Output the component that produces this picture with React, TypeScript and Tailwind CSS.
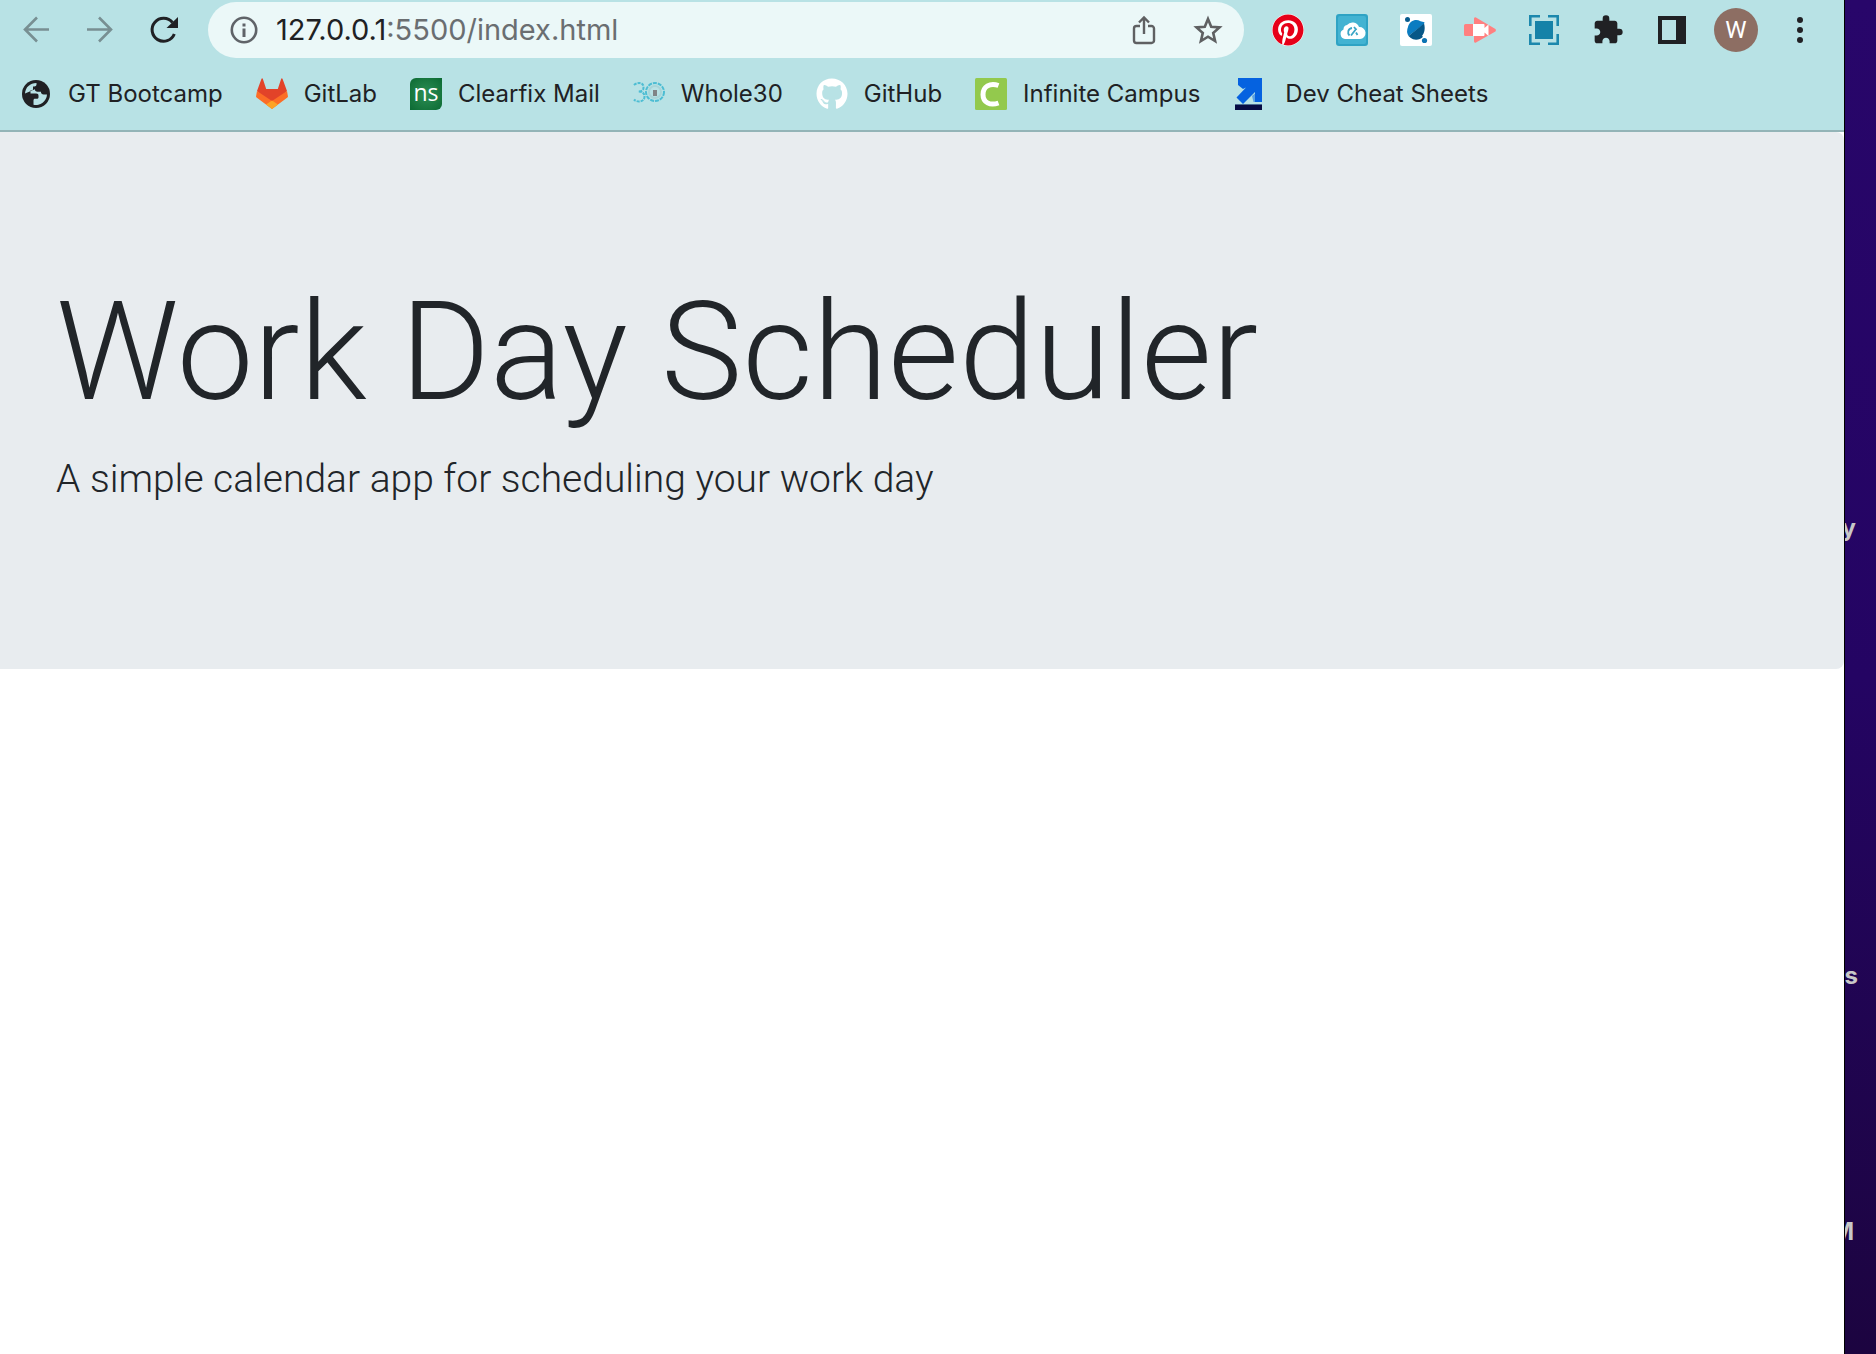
import React from "react";
import { MdExtension } from "react-icons/md";
import { FaGithub, FaPinterest } from "react-icons/fa";

function BackIcon({ flip = false }: { flip?: boolean }) {
  return (
    <svg viewBox="0 0 32 32" className={flip ? "size-8 -scale-x-100" : "size-8"} fill="none" stroke="#788f92" strokeWidth="2.6">
      <path d="M29 15.500H5M17 3.500 5 15.500l12 12" />
    </svg>
  );
}

function ReloadIcon() {
  return (
    <svg viewBox="0 0 32 32" className="size-8" fill="none">
      <path d="M26.300 20A11.500 11.500 0 1 1 24.500 8.500" stroke="#202124" strokeWidth="3" />
      <path d="M30 3v11H18.500z" fill="#202124" />
    </svg>
  );
}

function InfoIcon() {
  return (
    <svg viewBox="0 0 28 28" className="size-7 shrink-0" fill="none">
      <circle cx="14" cy="14" r="12.200" stroke="#5f6368" strokeWidth="2.600" />
      <path d="M14 12.500v8.500M14 7.500v3" stroke="#5f6368" strokeWidth="3" />
    </svg>
  );
}

function ShareIcon() {
  return (
    <svg viewBox="0 0 32 32" className="size-8" fill="none" stroke="#5f6062" strokeWidth="2.400">
      <path d="M12 12H8.500a2.500 2.500 0 0 0-2.500 2.500v12A2.500 2.500 0 0 0 8.500 29h15a2.500 2.500 0 0 0 2.500-2.500v-12a2.500 2.500 0 0 0-2.500-2.500H20M16 20V4M11 8.500l5-5 5 5" />
    </svg>
  );
}

function StarIcon() {
  return (
    <svg viewBox="0 0 32 32" className="size-8" fill="none" stroke="#5f6062" strokeWidth="2.600">
      <path d="m16 5 3.200 7.700 8.300.700-6.300 5.500 1.900 8.100-7.100-4.300L8.900 27l1.900-8.100-6.300-5.500 8.300-.700z" />
    </svg>
  );
}

function CloudIcon() {
  return (
    <svg viewBox="0 0 32 32" className="size-8">
      <rect width="32" height="32" rx="3" fill="#2fa3c4" />
      <rect x="2" y="2" width="28" height="28" rx="2" fill="#43b3d2" />
      <path d="M9 25a5 5 0 0 1-1.500-9.500A4.500 4.500 0 0 1 11 11a7 7 0 0 1 12 2 6 6 0 0 1 1 12z" fill="#fff" />
      <path d="M16 14c-4 .500-5 5-2.500 7.500M20.500 14.500l-5.500 7M20 18.500l1.500 2.500M18 13l2.500 3" fill="none" stroke="#3aa5c6" strokeWidth="1.800" />
    </svg>
  );
}

function OrbitIcon() {
  return (
    <svg viewBox="0 0 32 32" className="size-8">
      <rect width="32" height="32" rx="2" fill="#fff" />
      <circle cx="7.500" cy="5.500" r="2.500" fill="#0a5c8e" />
      <circle cx="24.500" cy="26.500" r="2.600" fill="#0b74b3" />
      <path d="M8.500 22A9 9.500 0 0 1 8 13C9.500 7 15.500 4.500 20.500 7.200L24.500 8.300 24 10z" fill="#0b7cc1" />
      <path d="M8.500 22 24 9.500c1.500 5 .500 9.500-2 12.500l1 .800c-3 3.500-9 4-12.500 1z" fill="#065787" />
    </svg>
  );
}

function CameraPlayIcon() {
  return (
    <svg viewBox="0 0 32 32" className="size-8">
      <path d="M0 11.500A1.500 1.500 0 0 1 1.500 10H10V4.500a1.500 1.500 0 0 1 2-1l19 11.200a1.700 1.700 0 0 1 0 3L12 28.500a1.500 1.500 0 0 1-2-1V22H1.500A1.500 1.500 0 0 1 0 20.500z" fill="#ff8080" />
      <path d="M9 10h10.500a1 1 0 0 1 1 1v3l4-3.500v11.500l-4-3.500V21a1 1 0 0 1-1 1H9z" fill="#fff" />
    </svg>
  );
}

function CaptureIcon() {
  return (
    <svg viewBox="0 0 32 32" className="size-8">
      <rect x="7" y="7" width="18" height="18" fill="#1582a8" />
      <path d="M2.300 12V2.300H12M20 2.300h9.700V12M29.700 20v9.700H20M12 29.700H2.300V20" fill="none" stroke="#1c88ad" strokeWidth="2.600" />
    </svg>
  );
}

function PanelIcon() {
  return (
    <svg viewBox="0 0 28 28" className="size-7">
      <path fillRule="evenodd" d="M0 0h28v28H0zM4 4v20h14V4z" fill="#202124" />
    </svg>
  );
}

function MenuDotsIcon() {
  return (
    <svg viewBox="0 0 32 32" className="size-8" fill="#202124">
      <circle cx="16" cy="6" r="3" />
      <circle cx="16" cy="16" r="3" />
      <circle cx="16" cy="26" r="3" />
    </svg>
  );
}

function GlobeIcon() {
  return (
    <svg viewBox="0 0 32 32" className="size-8">
      <circle cx="16" cy="16" r="14" fill="#202124" />
      <path d="M5 15.500C5.500 9 10 5.200 16.500 5v1.500c0 1.200-1 2-2.200 2H13v2.500c0 .800-.500 1.300-1.300 1.300H10.500v3.200h5.700c1.500 0 2.300.900 2.300 2.300v1.400c0 1-.800 1.600-1.700 1.600H15c-1 0-1.500.600-1.500 1.500v4.400a11 11 0 0 0 13.500-10.200h-3.500c-1.500 0-2.500-1-2.500-2.500v-.500h-3.500c-1.300 0-2-1-2-2v-.500" fill="#b8e2e5" />
      <path d="M15 9.500h2c1 0 1.500-.500 1.500-1.500V5l7 4 2 6.500h-4c-1.500 0-2.500-.700-2.500-2h-4c-1.300 0-2-1-2-2z" fill="#202124" />
    </svg>
  );
}

function GitLabIcon() {
  return (
    <svg viewBox="0 0 32 32" className="size-8">
      <path d="M1 13 5.500.700a.700.700 0 0 1 1.300 0L10.200 11h11.600L25.200.700a.700.700 0 0 1 1.300 0L31 13l-9 9-6 4-6-4z" fill="#e24329" />
      <path d="M1 13 16 23 31 13l.900 4.900a1.500 1.500 0 0 1-.500 1.600L16 31 .600 19.500a1.500 1.500 0 0 1-.500-1.600z" fill="#fc6d26" />
      <path d="m10 26.500 6-4 6 4L16 31z" fill="#fca326" />
    </svg>
  );
}

function MailIcon() {
  return (
    <span className="flex size-8 items-center justify-center rounded-tl-md rounded-br-md bg-radial from-[#2c8f55] to-[#0a6a33] pb-1 font-['Open_Sans',sans-serif] text-[23px] leading-none text-white">
      ns
    </span>
  );
}

function ThirtyIcon() {
  return (
    <svg viewBox="0 0 32 32" className="size-8" fill="none" stroke="#4dbdd3" strokeWidth="2">
      <path d="M1 7c3-3 10-3 9.500 2.500 0 3-2 4-5 4 4 0 6 2 6 5 0 6-8 6-10.500 3" strokeDasharray="3 1" />
      <circle cx="22" cy="14" r="9" strokeDasharray="4 1" />
      <circle cx="22" cy="14" r="6" stroke="#a9d5d8" />
      <path d="M22 12v6" stroke="#808486" strokeWidth="4" />
    </svg>
  );
}

function CampusIcon() {
  return (
    <svg viewBox="0 0 32 32" className="size-8">
      <rect width="32" height="32" rx="1.500" fill="#93c94d" />
      <path d="M23.500 7.500C15 4.500 8 8.500 8 16.500S15 28 23.500 25" fill="none" stroke="#fff" strokeWidth="5" />
    </svg>
  );
}

function CheatIcon() {
  return (
    <svg viewBox="0 0 32 32" className="size-8">
      <path d="M5 0h24v24h-7V14L10 26l-6.500-6.500L13 9.500l-3 1.500-5-4z" fill="#0562e0" />
      <path d="m19 18 1.500 6H22V15.500z" fill="#5aa0e4" />
      <path d="M2 27h27v5H2z" fill="#070c43" />
      <path d="M2 26h27v1H2z" fill="#4b6c92" />
    </svg>
  );
}

const extensions: { name: string; icon: React.ReactNode }[] = [
  {
    name: "Pinterest",
    icon: (
      <span className="rounded-full bg-white">
        <FaPinterest className="size-8 text-[#e60019]" />
      </span>
    ),
  },
  { name: "Cloud", icon: <CloudIcon /> },
  { name: "Orbit", icon: <OrbitIcon /> },
  { name: "Screen recorder", icon: <CameraPlayIcon /> },
  { name: "Screen capture", icon: <CaptureIcon /> },
  { name: "Extensions", icon: <MdExtension className="size-8 text-[#202124]" /> },
  { name: "Side panel", icon: <PanelIcon /> },
  {
    name: "Profile",
    icon: (
      <span className="flex size-11 items-center justify-center rounded-full bg-[#8d6e63] font-[Roboto,sans-serif] text-2xl text-white">
        W
      </span>
    ),
  },
  { name: "Menu", icon: <MenuDotsIcon /> },
];

const bookmarks: { name: string; icon: React.ReactNode }[] = [
  { name: "GT Bootcamp", icon: <GlobeIcon /> },
  { name: "GitLab", icon: <GitLabIcon /> },
  { name: "Clearfix Mail", icon: <MailIcon /> },
  { name: "Whole30", icon: <ThirtyIcon /> },
  { name: "GitHub", icon: <FaGithub className="size-8 text-white" /> },
  { name: "Infinite Campus", icon: <CampusIcon /> },
  { name: "Dev Cheat Sheets", icon: <CheatIcon /> },
];

function ToolButton({ label, children }: { label: string; children: React.ReactNode }) {
  return (
    <button type="button" aria-label={label} className="flex h-14 w-16 shrink-0 items-center justify-center">
      {children}
    </button>
  );
}

function Toolbar() {
  return (
    <div className="flex items-center pt-0.5 pr-3 pl-1">
      <ToolButton label="Back"><BackIcon /></ToolButton>
      <ToolButton label="Forward"><BackIcon flip /></ToolButton>
      <ToolButton label="Reload"><ReloadIcon /></ToolButton>
      <div className="mx-3 flex h-14 min-w-0 flex-1 items-center rounded-full bg-[#ebf8f8] pr-1 pl-[22px]">
        <InfoIcon />
        <a href="#address" className="ml-[18px] flex-1 truncate text-[29px] text-[#202124]">
          127.0.0.1<span className="text-[#6a6e71]">:5500/index.html</span>
        </a>
        <ToolButton label="Share"><ShareIcon /></ToolButton>
        <ToolButton label="Bookmark"><StarIcon /></ToolButton>
      </div>
      {extensions.map((e) => (
        <ToolButton key={e.name} label={e.name}>{e.icon}</ToolButton>
      ))}
    </div>
  );
}

function BookmarkBar() {
  return (
    <nav aria-label="Bookmarks" className="flex items-center gap-[33px] border-b-2 border-[#93b4b7] px-5 py-5 text-2xl text-[#202124]">
      {bookmarks.map((b) => (
        <a key={b.name} href="#bookmark" className="flex items-center gap-4 whitespace-nowrap last:gap-5">
          {b.icon}
          <span>{b.name}</span>
        </a>
      ))}
    </nav>
  );
}

export default function App() {
  return (
    <div className="flex min-h-screen bg-white font-[Inter,sans-serif]">
      <div className="flex min-w-0 flex-1 flex-col">
        <header className="bg-[#b8e2e5]">
          <Toolbar />
          <BookmarkBar />
        </header>
        <main>
          <section className="rounded-r-lg bg-[#e8ecef] px-14 py-32 font-[Roboto,sans-serif] text-[#212529]">
            <h1 className="mb-1 text-[137px] leading-[185px] font-[350]">Work Day Scheduler</h1>
            <p className="mb-8 text-[39px] leading-[60px] font-[350]">A simple calendar app for scheduling your work day</p>
          </section>
        </main>
      </div>
      <aside className="relative w-8 shrink-0 overflow-hidden border-l border-black bg-linear-to-b from-[#28066a] via-[#240463] to-[#1c0440] text-2xl font-bold text-[#c8c8c8]">
        <span className="absolute top-[512px] right-5">y</span>
        <span className="absolute top-[960px] right-[18px]">s</span>
        <span className="absolute top-[1216px] right-[22px]">M</span>
      </aside>
    </div>
  );
}
